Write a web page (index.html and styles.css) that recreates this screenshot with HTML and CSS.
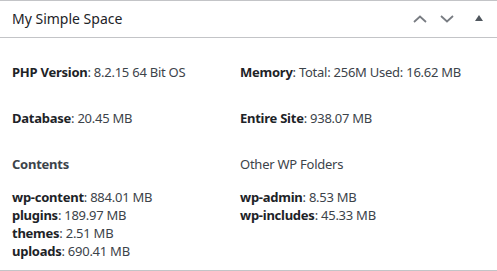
FILE: index.html
```html
<!DOCTYPE html>
<html lang="en">
<head>
    <meta charset="UTF-8">
    <meta name="viewport" content="width=device-width, initial-scale=1.0">
    <title>My Simple Space</title>
    <link rel="stylesheet" href="styles.css">
</head>
<body>
    <div class="postbox">
        <div class="postbox-header">
            <h2>My Simple Space</h2>
            <div class="handle-actions">
                <button class="handle-btn order-higher">
                    <svg width="14" height="8" viewBox="0 0 14 8"><path d="M1 7 L7 1.5 L13 7" fill="none" stroke="#787c82" stroke-width="1.8"/></svg>
                </button>
                <button class="handle-btn order-lower">
                    <svg width="14" height="8" viewBox="0 0 14 8"><path d="M1 1 L7 6.5 L13 1" fill="none" stroke="#787c82" stroke-width="1.8"/></svg>
                </button>
                <button class="handle-btn toggle">
                    <svg width="8" height="6" viewBox="0 0 8 6"><path d="M4 0 L8 6 L0 6 Z" fill="#50575e"/></svg>
                </button>
            </div>
        </div>
        <div class="inside">
            <div class="stats-grid">
                <p><strong>PHP Version</strong>: 8.2.15 64 Bit OS</p>
                <p><strong>Memory</strong>: Total: 256M Used: 16.62 MB</p>
                <p><strong>Database</strong>: 20.45 MB</p>
                <p><strong>Entire Site</strong>: 938.07 MB</p>
                <div class="folder-group">
                    <h3 class="group-title bold">Contents</h3>
                    <ul>
                        <li><strong>wp-content</strong>: 884.01 MB</li>
                        <li><strong>plugins</strong>: 189.97 MB</li>
                        <li><strong>themes</strong>: 2.51 MB</li>
                        <li><strong>uploads</strong>: 690.41 MB</li>
                    </ul>
                </div>
                <div class="folder-group">
                    <h3 class="group-title">Other WP Folders</h3>
                    <ul>
                        <li><strong>wp-admin</strong>: 8.53 MB</li>
                        <li><strong>wp-includes</strong>: 45.33 MB</li>
                    </ul>
                </div>
            </div>
        </div>
    </div>
</body>
</html>
```

FILE: styles.css
```css
body {
    margin: 0;
    background: #fff;
    font-family: "Noto Sans", "Open Sans", sans-serif;
    font-size: 13px;
    line-height: 18px;
    color: #3c434a;
}
.postbox {
    box-sizing: border-box;
    height: 271px;
    border-top: 1px solid #c3c4c7;
    border-bottom: 1px solid #c3c4c7;
}
.postbox-header {
    display: flex;
    align-items: center;
    justify-content: space-between;
    height: 36px;
    border-bottom: 1px solid #c3c4c7;
}
.postbox-header h2 {
    margin: 0;
    padding: 0 12px;
    font-size: 14px;
    font-weight: 400;
    color: #1d2327;
}
.handle-actions {
    display: flex;
    align-items: center;
    height: 36px;
}
.handle-btn {
    display: flex;
    align-items: center;
    justify-content: center;
    height: 36px;
    padding: 0;
    border: none;
    background: none;
    cursor: pointer;
}
.order-higher {
    width: 26px;
}
.order-lower {
    width: 28px;
}
.toggle {
    width: 36px;
    padding-bottom: 2px;
}
.inside {
    padding: 25px 12px 12px;
    letter-spacing: -0.25px;
}
.stats-grid {
    display: grid;
    grid-template-columns: 228px 1fr;
    row-gap: 28px;
}
.stats-grid p {
    margin: 0;
}
strong {
    color: #1d2327;
    font-weight: 700;
}
.group-title {
    margin: 0 0 15px;
    font-size: 13px;
    font-weight: 400;
    color: #3c434a;
}
.group-title.bold {
    font-weight: 700;
}
.folder-group ul {
    margin: 0;
    padding: 0;
    list-style: none;
}
```
